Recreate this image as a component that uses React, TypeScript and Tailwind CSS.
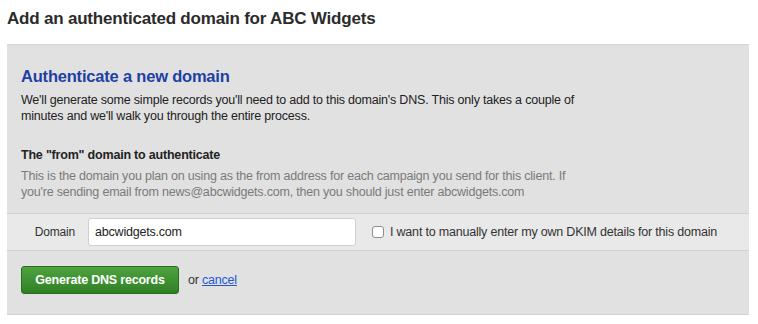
export default function App() {
  return (
    <div className="min-h-screen bg-white font-['Liberation_Sans',Arial,sans-serif] text-[12.5px] tracking-[-0.2px] text-[#333]">
      <h1 className="px-[7px] pt-[8px] text-[17px] font-bold leading-[22px] text-[#2b2b2b]">
        Add an authenticated domain for ABC Widgets
      </h1>
      <div className="mx-[7px] mt-[14px] w-[742px] border-t border-b border-[#d4d4d4] bg-[#e1e1e1]">
        <div className="px-[14px] pt-[21px]">
          <h2 className="text-[16.5px] font-bold leading-[20px] text-[#1e3fa3]">Authenticate a new domain</h2>
          <p className="mt-[6px] max-w-[575px] leading-[16px] text-[#222]">
            We'll generate some simple records you'll need to add to this domain's DNS. This only takes a couple of
            minutes and we'll walk you through the entire process.
          </p>
          <h3 className="mt-[23px] font-bold leading-[16px] text-[#222]">The "from" domain to authenticate</h3>
          <p className="mt-[5px] max-w-[575px] leading-[16px] text-[#7a7a7a]">
            This is the domain you plan on using as the from address for each campaign you send for this client. If
            you're sending email from news@abcwidgets.com, then you should just enter abcwidgets.com
          </p>
        </div>
        <div className="mt-[13px] flex h-[38px] items-center border-t border-b border-[#d2d2d2] bg-[#e9e9e9]">
          <label className="w-[68px] text-right text-[12px] text-[#333]">Domain</label>
          <input
            className="ml-[13px] h-[28px] w-[268px] rounded-[3px] border border-[#cfcfcf] bg-white px-[6px] text-[12.5px] tracking-[-0.2px] text-[#222] outline-none"
            defaultValue="abcwidgets.com"
          />
          <label className="ml-[16px] flex items-center gap-[6px] text-[#333]">
            <span className="h-[12px] w-[12px] rounded-[3px] border border-[#8e8e8e] bg-white" />
            I want to manually enter my own DKIM details for this domain
          </label>
        </div>
        <div className="flex items-center gap-[9px] px-[14px] pt-[15px] pb-[20px]">
          <button className="h-[28px] w-[158px] rounded-[3px] border border-[#2a6d1f] bg-gradient-to-b from-[#4ea33e] to-[#2f8024] text-[12.5px] font-bold tracking-[-0.2px] text-white">
            Generate DNS records
          </button>
          <span className="text-[#333]">
            or{" "}
            <a href="#" className="text-[#2457d6] underline">
              cancel
            </a>
          </span>
        </div>
      </div>
    </div>
  );
}
